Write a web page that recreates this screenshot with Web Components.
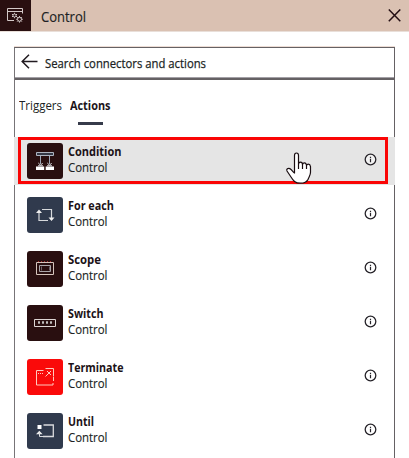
<!DOCTYPE html>
<html lang="en"><head><meta charset="utf-8"><title>Control</title>
<style>body{margin:0;background:#fff;overflow:hidden;font-family:"Open Sans","Noto Sans",sans-serif;color:#201f24}</style></head>
<body><control-app></control-app>
<script>
const icons={
window:`<svg width="31" height="31" viewBox="0 0 31 31" fill="none" stroke="#d3c9c8"><path d="M14 20.5H7.5V8.5h15v5M7.5 11.5h15"/><circle cx="14.5" cy="15.5" r="1.5"/><path d="M14.5 12.8v1M14.5 17.2v1M12 14.2l1 .6M16 16.2l1 .6M17 14.2l-1 .6M13 16.2l-1 .6"/><circle cx="19.5" cy="19.3" r="2"/><path d="M19.5 16v1.3M19.5 21.3v1.3M16.2 19.3h1.3M21.5 19.3h1.3M17.2 17l1 1M20.8 20.6l1 1M21.8 17l-1 1M18.2 20.6l-1 1"/></svg>`,
condition:`<svg width="36" height="36" fill="none" stroke="#dedfe3"><path d="M9.5 9.5h17v3h-17z" fill="#343846" stroke="#aeb4c0"/><path d="M13.5 13v8M22.5 13v8" stroke="#9da8b8"/><path d="M11.3 20l2.2 2.2 2.2-2.2M20.3 20l2.2 2.2 2.2-2.2"/><path d="M9 23.5h8.2V27H9zM18.7 23.5H27V27h-8.3z" fill="#fff" stroke="none"/><path d="M11 22.8h5M20 22.8h5"/></svg>`,
each:`<svg width="36" height="36" fill="none" stroke="#d7d9dc" stroke-width="1.2"><path d="M15 12.5h9.5v9M21 23.5h-9v-9"/><path d="M9 16l3-3.5 3 3.5zM21.5 20.5l3 3.5 3-3.5z" fill="#eee" stroke="none"/></svg>`,
scope:`<svg width="36" height="36" fill="none" stroke="#d6c5bd"><path d="M9.5 11.5h17v12h-17z"/><path d="M12.5 14.5h11v6h-11z" stroke="#aaa5a9"/><path d="M14.5 15.5v4M22.5 15.5v4" stroke="#6e6369"/><path d="M11 10.5h15" stroke="#a33" stroke-dasharray="1 2"/></svg>`,
switch:`<svg width="36" height="36" fill="none" stroke="#ddd6d4"><path d="M7.5 14.5h21v7h-21z"/><path d="M11 17.5h2M15 17.5h2M19 17.5h2M23 17.5h2" stroke-width="2"/><path d="M12 16v3M16 16v3M20 16v3M24 16v3" stroke="#aaa"/></svg>`,
terminate:`<svg width="36" height="36" fill="none" stroke="#ffc9bd"><path d="M16.5 11.5h-7v14.5h16.5v-2M26.5 18v4M18.5 9.5h8v8"/><path d="M11 14.5h6" stroke-dasharray="1 1"/><path d="M20 12l4 4M24 12l-5.5 5.5"/></svg>`,
until:`<svg width="36" height="36" fill="none" stroke="#d9dadd"><path d="M16.5 12h9.8v11.5H16" stroke-width="1.3"/><path d="M10.5 12h4v4h-4z" fill="#fff" stroke="none"/><path d="M9 21.3l3.3-3.5 3.3 3.5z" fill="#eee" stroke="none"/><path d="M12.5 20v3.5H16"/></svg>`
};
const define=(name,html,init)=>customElements.define(name,class extends HTMLElement{
 connectedCallback(){const r=this.attachShadow({mode:'open'});r.innerHTML=typeof html==='function'?html(this):html;if(init)init(this,r)}
});
define('fit-text',e=>`<style>:host{display:block;width:${e.getAttribute('w')}px;white-space:nowrap}span{display:inline-block;transform-origin:0 50%}</style><span><slot></slot></span>`,(e,r)=>{
 const s=r.querySelector('span'),n=s.getBoundingClientRect().width;
 if(n)s.style.transform=`scaleX(${+e.getAttribute('w')/n})`;
});
define('glyph-icon',e=>`<style>:host{display:block;line-height:0}svg{display:block}</style>${icons[e.getAttribute('name')]}`);
define('info-mark',`<style>:host{display:block;width:13px;height:13px}</style><svg width="13" height="13" style="display:block"><circle cx="6.5" cy="6.5" r="5.3" fill="#fff" fill-opacity=".5" stroke="#27242a" stroke-width="1.3"/><path d="M6.5 5.8v3.5M6.5 3.7V5" stroke="#27242a" stroke-width="1.2"/></svg>`);
define('app-header',`<style>:host{display:flex;height:31px;align-items:center;background:#dac1b2;border-bottom:1px solid #e9dfd9}
.i{width:31px;height:31px;background:#290f10}fit-text{margin-left:10px;font-size:15.2px;line-height:30px;-webkit-text-stroke:.15px}.x{margin-left:auto;margin-right:8px}</style>
<div class="i"><glyph-icon name="window"></glyph-icon></div><fit-text w="45">Control</fit-text><svg class="x" width="13" height="13"><path d="M.8.5l11.5 11.7M12.3.5L.8 12.2" stroke="#240f14" stroke-width="1.5"/></svg>`);
define('search-bar',`<style>:host{display:flex;height:30px;align-items:center;border-bottom:2px solid #656164;box-shadow:inset 0 -1px #a3a0a6}svg{margin:-3px 0 0 6px}fit-text{margin-left:7px;margin-top:-1px;font-size:12.7px;line-height:28px;-webkit-text-stroke:.25px}</style>
<svg width="17" height="16" fill="none" stroke="#211b20" stroke-width="1.5"><path d="M16.5 7.5H1.3M8 .8L1.2 7.5 8 14.2"/></svg><fit-text w="161">Search connectors and actions</fit-text>`);
define('tab-bar',`<style>:host{display:flex;height:54px;padding-left:4px;gap:7px;font-size:13px;line-height:18px;box-sizing:border-box;padding-top:16px}
.a{font-weight:700;color:#1d151b}i{display:block;width:25px;height:3px;margin:8px 0 0 8px;background:#363b4a}</style><fit-text w="43">Triggers</fit-text><div class="a" style="margin-left:1px"><fit-text w="40.5">Actions</fit-text><i></i></div>`);
define('action-row',e=>`<style>:host{display:flex;position:relative;height:54px;box-sizing:border-box;align-items:center;padding:0 17px 0 12px}
:host([selected])::before{content:"";position:absolute;inset:3px -1px 3px;background:#e5e5e5}:host([selected])::after{content:"";position:absolute;left:3px;right:6px;top:3px;height:47px;box-sizing:border-box;border:3px solid #fa0505}
.tile{position:relative;width:36px;height:36px;border-radius:3px;background:${e.getAttribute('color')}}.text{position:relative;margin-left:5px;font-size:12.8px;line-height:16px;margin-top:-4px}b{display:block;color:#1c1217}b+fit-text{-webkit-text-stroke:.15px}info-mark{position:relative;margin-left:auto;margin-top:-3px}</style>
<div class="tile"><glyph-icon name="${e.getAttribute('icon')}"></glyph-icon></div><div class="text"><b><fit-text w="${e.getAttribute('w')}">${e.getAttribute('label')}</fit-text></b><fit-text w="39.5">Control</fit-text></div><info-mark></info-mark>`);
define('hand-pointer',`<style>:host{position:absolute;left:285px;top:151px;z-index:2}svg{display:block}</style><svg width="27" height="34" fill="#fff" stroke="#180c10" stroke-width="1.2" stroke-linejoin="round"><path d="M9.5 19.5V4.5q0-2.5 2-2.5t2 2.5v9q0-2.3 2-2.3t2 2.5q.4-1.8 2-1.8t2 2.6q.4-1.3 2-1.3t2 2.4v5.6c0 3-1.3 4-2.4 7-1.4 3-3.8 4-7.6 4-5.5 0-7.2-2.5-9.5-6.2L2 20c-.9-1.7.9-3.4 2.8-2.4 2 1 3 3.2 4.7 4.4zM13.5 13.5V18M17.5 13.5V18M21.5 14.5V18"/></svg>`);
define('control-app',`<style>:host{display:block;position:relative;height:458px;overflow:hidden}main{margin:15px 14px 0;height:412px;box-sizing:border-box;border:1px solid #656164;border-left-color:#777477;border-bottom:0;box-shadow:0 -1px #ecdcd4}</style>
<app-header></app-header><main><search-bar></search-bar><tab-bar></tab-bar>
<action-row selected icon="condition" color="#290f10" label="Condition" w="53.5"></action-row>
<action-row icon="each" color="#303a4d" label="For each" w="46"></action-row>
<action-row icon="scope" color="#290f10" label="Scope" w="33"></action-row>
<action-row icon="switch" color="#290f10" label="Switch" w="35.5"></action-row>
<action-row icon="terminate" color="#fa0a0a" label="Terminate" w="55.5"></action-row>
<action-row icon="until" color="#303a4d" label="Until" w="26"></action-row></main><hand-pointer></hand-pointer>`);
</script></body></html>
